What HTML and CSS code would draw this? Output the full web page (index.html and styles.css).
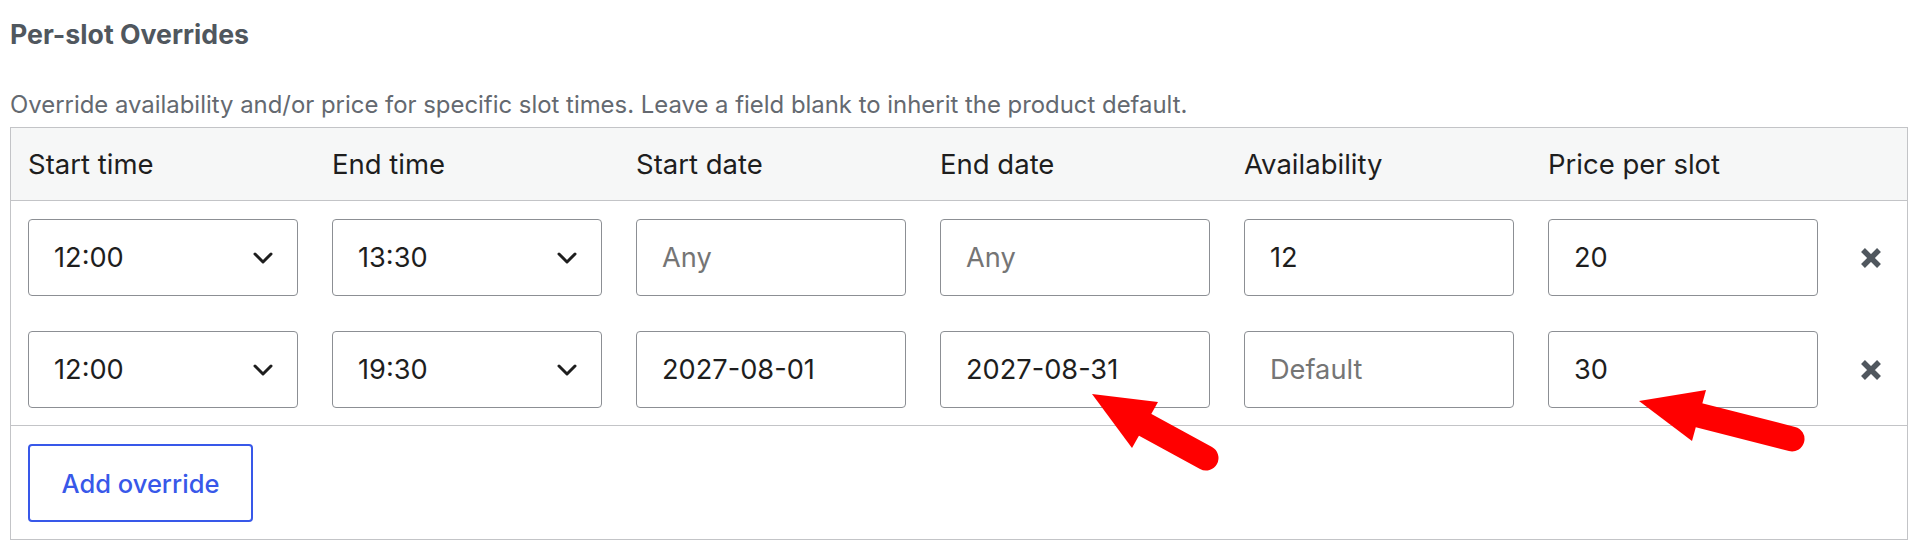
FILE: index.html
```html
<!DOCTYPE html>
<html lang="en">
<head>
<meta charset="utf-8">
<title>Per-slot Overrides</title>
<link rel="stylesheet" href="styles.css">
</head>
<body>
<div class="panel">
  <h3 class="panel-title">Per-slot Overrides</h3>
  <p class="panel-desc">Override availability and/or price for specific slot times. Leave a field blank to inherit the product default.</p>

  <div class="overrides">
    <div class="ov-row ov-head">
      <div class="ov-label">Start time</div>
      <div class="ov-label">End time</div>
      <div class="ov-label">Start date</div>
      <div class="ov-label">End date</div>
      <div class="ov-label">Availability</div>
      <div class="ov-label">Price per slot</div>
      <div></div>
    </div>

    <div class="ov-body">
      <div class="ov-row">
        <div class="field select"><span class="val">12:00</span><svg class="chev" viewBox="0 0 20 12"><path d="M2 2l8 8 8-8"/></svg></div>
        <div class="field select"><span class="val">13:30</span><svg class="chev" viewBox="0 0 20 12"><path d="M2 2l8 8 8-8"/></svg></div>
        <div class="field"><span class="ph">Any</span></div>
        <div class="field"><span class="ph">Any</span></div>
        <div class="field"><span class="val">12</span></div>
        <div class="field"><span class="val">20</span></div>
        <div class="remove"><svg viewBox="0 0 22 22"><path d="M3 3l16 16M19 3L3 19"/></svg></div>
      </div>
      <div class="ov-row">
        <div class="field select"><span class="val">12:00</span><svg class="chev" viewBox="0 0 20 12"><path d="M2 2l8 8 8-8"/></svg></div>
        <div class="field select"><span class="val">19:30</span><svg class="chev" viewBox="0 0 20 12"><path d="M2 2l8 8 8-8"/></svg></div>
        <div class="field"><span class="val">2027-08-01</span></div>
        <div class="field"><span class="val">2027-08-31</span></div>
        <div class="field"><span class="ph">Default</span></div>
        <div class="field"><span class="val">30</span></div>
        <div class="remove"><svg viewBox="0 0 22 22"><path d="M3 3l16 16M19 3L3 19"/></svg></div>
      </div>
    </div>

    <div class="ov-foot">
      <button class="btn-add" type="button">Add override</button>
    </div>
  </div>
</div>

<!-- callout arrows drawn over the form -->
<svg class="callouts" width="1916" height="558" viewBox="0 0 1916 558">
  <g fill="#ff0000" stroke="none">
    <polygon points="1092,394 1158,402 1132,448"/>
    <polygon points="1639,401 1706,390 1692,441"/>
  </g>
  <g stroke="#ff0000" stroke-width="25" stroke-linecap="round" fill="none">
    <line x1="1140" y1="422" x2="1206" y2="458"/>
    <line x1="1694" y1="414" x2="1792" y2="439"/>
  </g>
</svg>
</body>
</html>
```

FILE: styles.css
```css
* { box-sizing: border-box; }

html, body {
  margin: 0;
  padding: 0;
  background: #fff;
}

body {
  font-family: Inter, "Noto Sans", "Liberation Sans", sans-serif;
  color: #1e1e1e;
  width: 1916px;
  height: 558px;
  overflow: hidden;
  position: relative;
}

.panel {
  padding: 0 8px 0 10px;
}

.panel-title {
  margin: 0;
  padding-top: 18px;
  font-size: 26.7px;
  line-height: 32px;
  font-weight: 700;
  color: #50575e;
}

.panel-desc {
  margin: 0;
  padding-top: 39px;
  font-size: 23.9px;
  line-height: 32px;
  color: #646970;
}

.overrides {
  margin-top: 6px;
  border: 1px solid #c3c4c7;
}

.ov-row {
  display: grid;
  grid-template-columns: repeat(6, 270px) 1fr;
  column-gap: 34px;
  padding: 0 17px;
  align-items: center;
}

.ov-head {
  height: 73px;
  background: #f6f7f7;
  border-bottom: 1px solid #c3c4c7;
}

.ov-label {
  font-size: 27.5px;
  color: #1e1e1e;
}

.ov-body .ov-row {
  padding-top: 18px;
  padding-bottom: 17px;
}

.field {
  height: 77px;
  border: 1.5px solid #8c8f94;
  border-radius: 4px;
  background: #fff;
  display: flex;
  align-items: center;
  padding: 0 24px 0 25px;
  font-size: 27.2px;
}

.val { color: #1e1e1e; }
.ph { color: #757575; }

.select {
  justify-content: space-between;
  padding-right: 24px;
}

.chev {
  width: 20px;
  height: 12px;
  fill: none;
  stroke: #1e1e1e;
  stroke-width: 3;
  stroke-linecap: round;
  stroke-linejoin: round;
}

.remove {
  display: flex;
  justify-content: center;
  align-items: center;
}

.remove svg {
  width: 22px;
  height: 22px;
  fill: none;
  stroke: #50575e;
  stroke-width: 5.5;
  stroke-linecap: butt;
}

.ov-foot {
  border-top: 1px solid #c3c4c7;
  padding: 18px 17px 17px;
}

.btn-add {
  height: 78px;
  width: 225px;
  border: 2px solid #3858e9;
  border-radius: 4px;
  background: #fff;
  color: #3858e9;
  font-family: inherit;
  font-size: 25.5px;
  font-weight: 500;
  padding: 0;
  cursor: pointer;
}

.callouts {
  position: absolute;
  left: 0;
  top: 0;
  pointer-events: none;
}
```
